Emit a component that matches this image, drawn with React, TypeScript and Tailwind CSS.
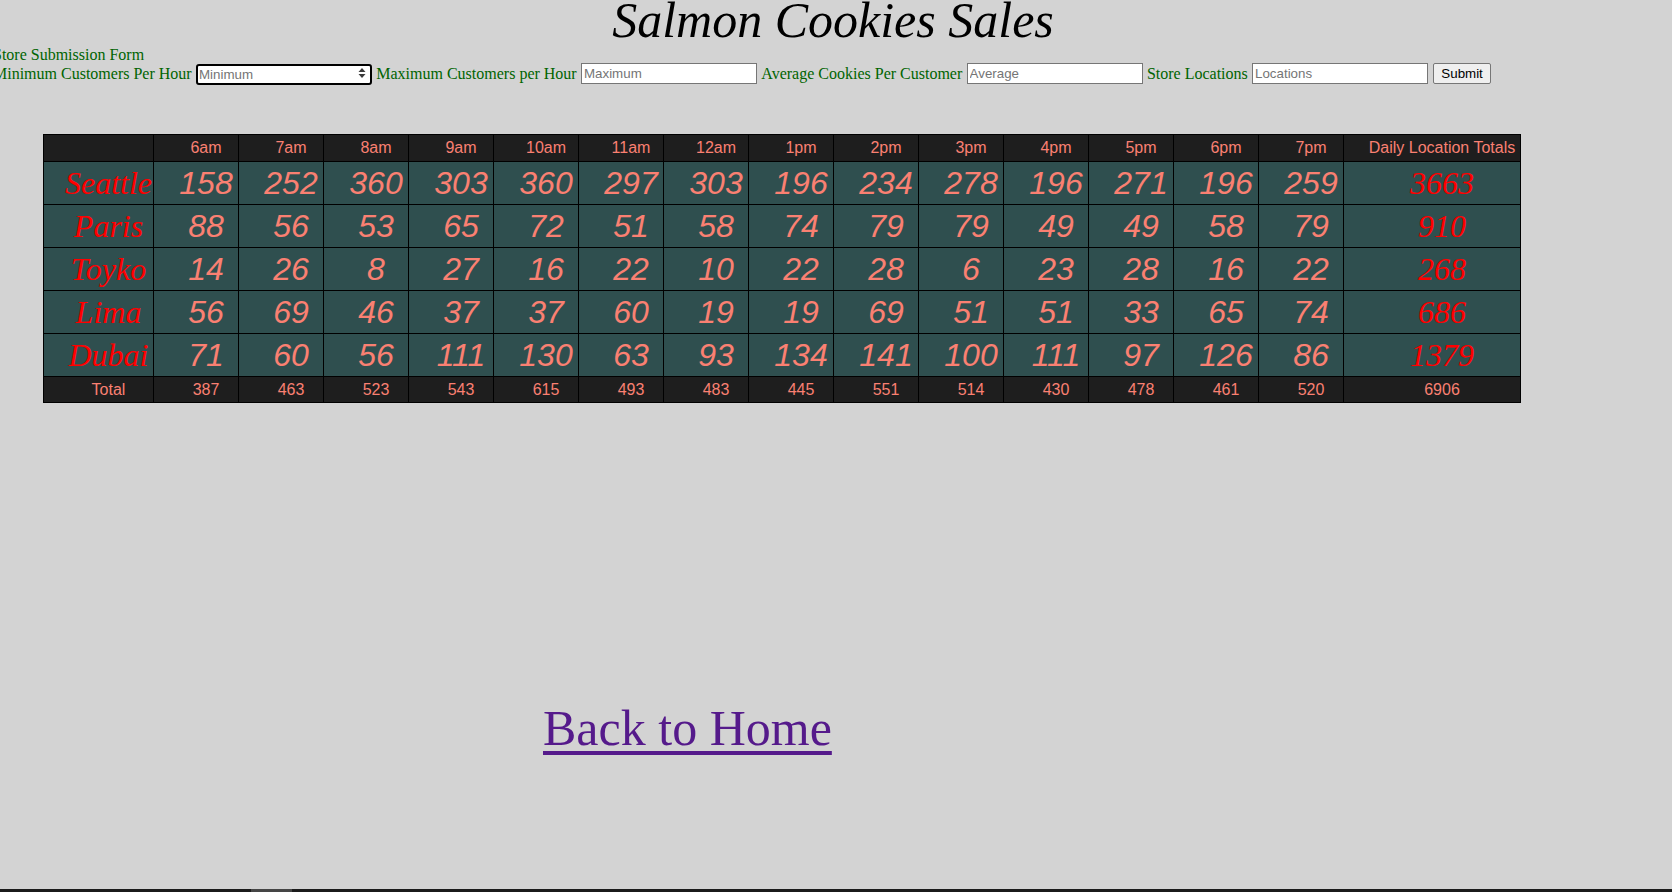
const hours = ["6am", "7am", "8am", "9am", "10am", "11am", "12am", "1pm", "2pm", "3pm", "4pm", "5pm", "6pm", "7pm"];

const stores = [
  { name: "Seattle", sales: [158, 252, 360, 303, 360, 297, 303, 196, 234, 278, 196, 271, 196, 259], total: 3663 },
  { name: "Paris", sales: [88, 56, 53, 65, 72, 51, 58, 74, 79, 79, 49, 49, 58, 79], total: 910 },
  { name: "Toyko", sales: [14, 26, 8, 27, 16, 22, 10, 22, 28, 6, 23, 28, 16, 22], total: 268 },
  { name: "Lima", sales: [56, 69, 46, 37, 37, 60, 19, 19, 69, 51, 51, 33, 65, 74], total: 686 },
  { name: "Dubai", sales: [71, 60, 56, 111, 130, 63, 93, 134, 141, 100, 111, 97, 126, 86], total: 1379 },
];

const hourTotals = [387, 463, 523, 543, 615, 493, 483, 445, 551, 514, 430, 478, 461, 520];

function Field({ placeholder }: { placeholder: string }) {
  return (
    <input
      type="text"
      placeholder={placeholder}
      className="h-[21px] w-[176px] border border-[#767676] bg-white px-[2px] font-['Liberation_Sans',Arial,sans-serif] text-[13.33px] text-black placeholder:text-[#757575] outline-none"
    />
  );
}

export default function App() {
  return (
    <div className="flex min-h-[892px] flex-col overflow-hidden bg-[#d3d3d3] font-['Liberation_Serif','Times_New_Roman',serif]">
      <h1 className="pr-[6px] text-center text-[50px] font-normal italic leading-[40px] text-black">Salmon Cookies Sales</h1>

      <form className="-ml-[7px] mt-[6px] text-[16px] text-[#006400]" onSubmit={(e) => e.preventDefault()}>
        <div className="leading-[17px]">Store Submission Form</div>
        <div className="flex h-[21px] items-center gap-[4.3px] whitespace-nowrap">
          <span>Minimum Customers Per Hour</span>
          <span className="relative inline-block">
            <input
              type="text"
              placeholder="Minimum"
              className="h-[21px] w-[176px] rounded-[3px] border-2 border-black bg-white px-[1px] font-['Liberation_Sans',Arial,sans-serif] text-[13.33px] text-black placeholder:text-[#757575] outline-none"
            />
            <svg className="absolute right-[6px] top-[5px]" width="8" height="12" viewBox="0 0 8 12">
              <path d="M4 1 L7.5 5 L0.5 5 Z" fill="#3b3b3b" />
              <path d="M4 11 L7.5 7 L0.5 7 Z" fill="#3b3b3b" />
            </svg>
          </span>
          <span>Maximum Customers per Hour</span>
          <Field placeholder="Maximum" />
          <span>Average Cookies Per Customer</span>
          <Field placeholder="Average" />
          <span>Store Locations</span>
          <Field placeholder="Locations" />
          <button
            type="submit"
            className="ml-[1px] h-[21px] rounded-[2px] border border-[#767676] bg-[#efefef] px-[7px] font-['Liberation_Sans',Arial,sans-serif] text-[13.33px] text-black"
          >
            Submit
          </button>
        </div>
      </form>

      <table className="ml-[43px] mt-[50px] w-[1477px] table-fixed border-collapse border border-black font-['Liberation_Sans',Arial,sans-serif] text-[#fa8072]">
        <colgroup>
          <col className="w-[110px]" />
          {hours.map((h) => (
            <col key={h} className="w-[85px]" />
          ))}
          <col className="w-[177px]" />
        </colgroup>
        <thead>
          <tr className="h-[27px] bg-[#1e1e1e] text-[16px]">
            <th className="border border-black font-normal"></th>
            {hours.map((h) => (
              <th key={h} className="border border-black pl-[20px] text-center font-normal">
                {h}
              </th>
            ))}
            <th className="whitespace-nowrap border border-black pl-[20px] text-center font-normal">Daily Location Totals</th>
          </tr>
        </thead>
        <tbody>
          {stores.map((s) => (
            <tr key={s.name} className="h-[43px] bg-[#2f4f4f]">
              <td className="whitespace-nowrap border border-black pl-[20px] text-center font-['Liberation_Serif','Times_New_Roman',serif] text-[32px] italic leading-none text-[#ff0000]">
                {s.name}
              </td>
              {s.sales.map((v, i) => (
                <td key={i} className="border border-black pl-[20px] text-center text-[32px] italic leading-none">
                  {v}
                </td>
              ))}
              <td className="border border-black pl-[20px] text-center font-['Liberation_Serif','Times_New_Roman',serif] text-[32px] italic leading-none text-[#ff0000]">
                {s.total}
              </td>
            </tr>
          ))}
          <tr className="h-[26px] bg-[#1e1e1e] text-[16px] leading-none">
            <td className="border border-black pl-[20px] text-center">Total</td>
            {hourTotals.map((v, i) => (
              <td key={i} className="border border-black pl-[20px] text-center">
                {v}
              </td>
            ))}
            <td className="border border-black pl-[20px] text-center">6906</td>
          </tr>
        </tbody>
      </table>

      <div className="mt-[298px] pl-[543px] text-[50px] leading-[55px]">
        <a href="#" className="text-[#551a8b] underline decoration-[4px] underline-offset-[6px]">
          Back to Home
        </a>
      </div>

      <div className="mt-auto flex h-[3px] bg-[#1b1b1b]">
        <div className="w-[251px]" />
        <div className="w-[41px] bg-[#454545]" />
      </div>
    </div>
  );
}
